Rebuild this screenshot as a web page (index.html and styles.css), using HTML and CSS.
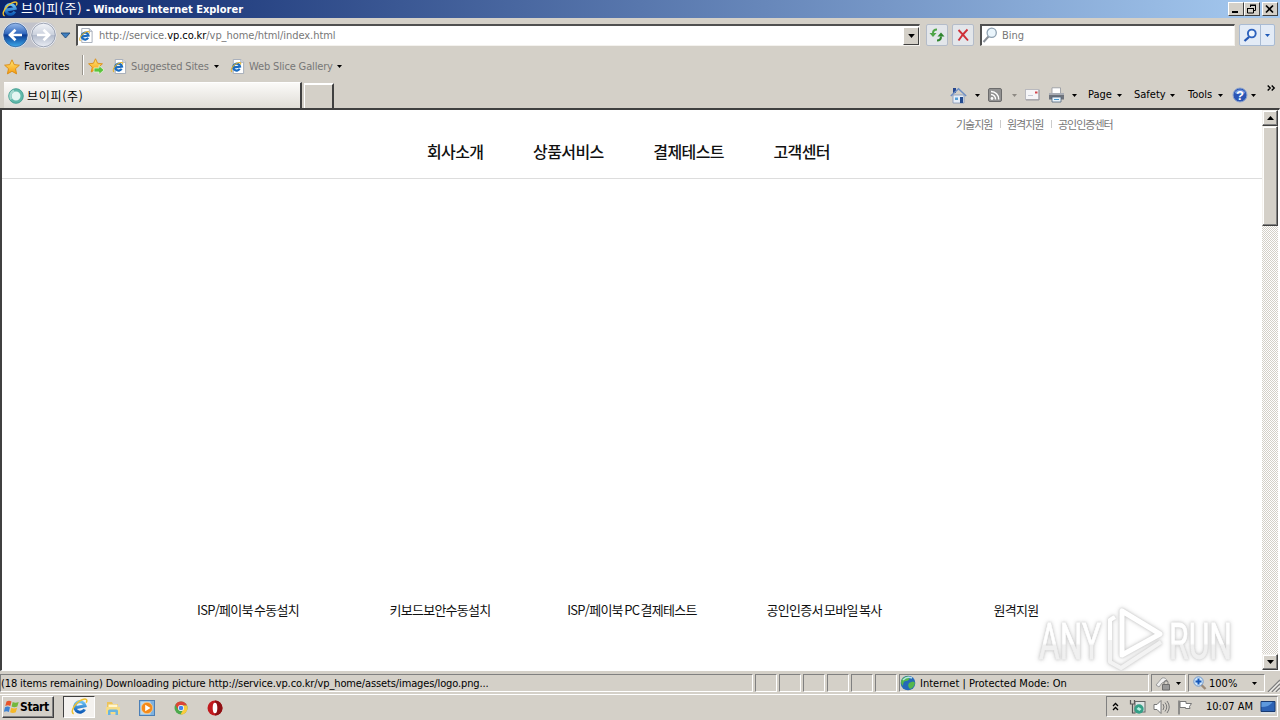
FILE: index.html
```html
<!DOCTYPE html>
<html lang="ko">
<head>
  <meta charset="UTF-8">
  <meta name="viewport" content="width=device-width, initial-scale=1.0">
  <title>브이피(주)</title>
  <link rel="stylesheet" href="styles.css">
</head>
<body>
  <!-- shared icons -->
  <svg class="defs" width="0" height="0">
    <defs>
      <linearGradient id="blueBall" x1="0" y1="0" x2="0" y2="1">
        <stop offset="0" stop-color="#9fc0ee"/>
        <stop offset=".45" stop-color="#2f66bd"/>
        <stop offset=".5" stop-color="#0b3a92"/>
        <stop offset="1" stop-color="#3fb0f0"/>
      </linearGradient>
      <linearGradient id="greyBall" x1="0" y1="0" x2="0" y2="1">
        <stop offset="0" stop-color="#f4f6fa"/>
        <stop offset=".48" stop-color="#ccd2de"/>
        <stop offset=".52" stop-color="#b4bccd"/>
        <stop offset="1" stop-color="#eef1f7"/>
      </linearGradient>
      <linearGradient id="gold" x1="0" y1="0" x2="0" y2="1">
        <stop offset="0" stop-color="#ffe878"/>
        <stop offset="1" stop-color="#f79b0c"/>
      </linearGradient>
      <linearGradient id="eBlue" x1="0" y1="0" x2="0" y2="1">
        <stop offset="0" stop-color="#6cc4f5"/>
        <stop offset="1" stop-color="#0f5cb8"/>
      </linearGradient>
      <linearGradient id="markFill" x1="0" y1="0" x2="0" y2="1">
        <stop offset=".52" stop-color="#ffffff"/>
        <stop offset=".56" stop-color="#f0f0f0"/>
      </linearGradient>
      <symbol id="ie" viewBox="0 0 16 16">
        <path d="M12.800 10.700A4.900 5 -20 1 1 13.200 7.300L5 9" fill="none" stroke="url(#eBlue)" stroke-width="2.900"/>
        <path d="M2.600 14.800C-1.500 13.500 4 4 10.500 1.600 14.500.2 15.800 1.500 14.300 4.500" fill="none" stroke="#efc02e" stroke-width="1.400"/>
      </symbol>
      <symbol id="iepage" viewBox="0 0 16 16">
        <path d="M3.500.5h8l3 3v12h-11z" fill="#fff" stroke="#a3abb8"/>
        <path d="M11.500.5v3h3" fill="#dde4ee" stroke="#a3abb8"/>
        <path d="M10.300 10.500A3.700 3.700 0 1 1 10.700 8L4.500 9" fill="none" stroke="#1b6cc0" stroke-width="2.300"/>
        <path d="M2.200 13.600C-.8 12.300 4 5.500 8.500 4c2.600-.8 3.500.2 2.800 2" fill="none" stroke="#e0b02b" stroke-width="1.100"/>
      </symbol>
      <symbol id="star" viewBox="0 0 16 16">
        <path d="M8 .8l2.200 4.800 5.200.6-3.900 3.500 1.100 5.200L8 12.300l-4.600 2.600 1.100-5.200L.6 6.200l5.200-.6z" fill="url(#gold)" stroke="#d98a12" stroke-width=".9"/>
      </symbol>
      <symbol id="down" viewBox="0 0 5 3"><path d="M0 0h5L2.500 3z" fill="currentColor"/></symbol>
    </defs>
  </svg>

  <div class="titlebar">
    <svg class="title-icon" width="16" height="16"><use href="#ie"/></svg>
    <span class="title-text"><span class="title-ko">브이피(주)</span> - Windows Internet Explorer</span>
    <div class="window-buttons">
      <span class="win-btn"><svg width="12" height="10"><path d="M2 8h6" stroke="#000" stroke-width="2"/></svg></span>
      <span class="win-btn"><svg width="12" height="10"><path d="M4 1h6M4 1.500h6M4.500 1v2M9.500 1v5.500H8M1.500 4v5h6V4M1 4.500h7" fill="none" stroke="#000"/></svg></span>
      <span class="win-btn close"><svg width="12" height="10"><path d="M2 1.500l7 7M9 1.500l-7 7" stroke="#000" stroke-width="1.700"/></svg></span>
    </div>
  </div>

  <div class="address-row">
    <svg class="travel" width="74" height="30" viewBox="0 0 74 30">
      <path d="M10 2.500h38q8 1 8 12.500t-8 12.500H10z" fill="#c2c3cb"/>
      <circle cx="15.500" cy="15" r="12.500" fill="url(#blueBall)" stroke="#e7edf5"/>
      <circle cx="15.500" cy="15" r="11.800" fill="none" stroke="#33588f" stroke-width=".7"/>
      <path d="M22 15H10.500M15.500 9.800L10 15l5.500 5.200" fill="none" stroke="#fff" stroke-width="2.700"/>
      <circle cx="43.500" cy="15" r="12.500" fill="url(#greyBall)" stroke="#f1f2f5"/>
      <circle cx="43.500" cy="15" r="11.800" fill="none" stroke="#8891a3" stroke-width=".8"/>
      <path d="M37 15h11.500M43.500 9.800L49 15l-5.500 5.200" fill="none" stroke="#fff" stroke-width="2.700"/>
      <path d="M61 13h9l-4.500 5z" fill="#3f7fc0" stroke="#234c7c" stroke-width=".9"/>
    </svg>
    <div class="field address">
      <svg width="16" height="15"><use href="#iepage"/></svg>
      <span class="url">http://service.<b>vp.co.kr</b>/vp_home/html/index.html</span>
      <span class="drop-btn"><svg width="7" height="4"><use href="#down"/></svg></span>
    </div>
    <span class="tool-btn">
      <svg width="18" height="16" viewBox="0 0 18 16"><path d="M9 2.500Q5 2.500 5 6" fill="none" stroke="#4fa548" stroke-width="2"/><path d="M1.500 6h7L5 10z" fill="#4fa548"/><path d="M9 13.500q4 0 4-4" fill="none" stroke="#2f852e" stroke-width="2"/><path d="M9.500 9.500h7L13 5.500z" fill="#2f852e"/></svg>
    </span>
    <span class="tool-btn">
      <svg width="14" height="14"><path d="M2.500 2q4 4 9.500 10.500M11.500 1.500Q6 7 2.500 12.500" fill="none" stroke="#cf3038" stroke-width="1.900"/></svg>
    </span>
    <div class="field search">
      <svg width="17" height="17" viewBox="0 0 17 17"><path d="M6.500 9.500L1.500 15" stroke="#8b9199" stroke-width="2"/><circle cx="9.700" cy="5.800" r="4.600" fill="#eaf5fc" stroke="#8fa2b2" stroke-width="1.300"/></svg>
      <span class="hint">Bing</span>
    </div>
    <div class="search-btn">
      <span class="go"><svg width="15" height="15" viewBox="0 0 15 15"><path d="M6 9L1.500 13" stroke="#2457b3" stroke-width="2.300"/><circle cx="8.800" cy="5.500" r="3.900" fill="#eef5fd" stroke="#2d62bd" stroke-width="1.900"/></svg></span>
      <span class="more"><svg width="5" height="3"><use href="#down"/></svg></span>
    </div>
  </div>

  <div class="favorites-row">
    <svg class="fav-star" width="16" height="16"><use href="#star"/></svg>
    <span class="fav-label">Favorites</span>
    <span class="divider"></span>
    <svg class="fav-add" width="17" height="17" viewBox="0 0 17 17"><use href="#star" width="15" height="15"/><path d="M6 10h5V7.500l5 4.500-5 4.500V14H6z" fill="#5ac43c" stroke="#e5f5d8" stroke-width=".8"/></svg>
    <svg class="fav-icon" width="15" height="15"><use href="#iepage"/></svg>
    <span class="fav-link suggested">Suggested Sites</span>
    <svg class="fav-arrow" width="5" height="3"><use href="#down"/></svg>
    <svg class="fav-icon" width="15" height="15"><use href="#iepage"/></svg>
    <span class="fav-link gallery">Web Slice Gallery</span>
    <svg class="fav-arrow" width="5" height="3"><use href="#down"/></svg>
  </div>

  <div class="tab-row">
    <div class="tab">
      <svg width="16" height="16"><circle cx="8" cy="8" r="6" fill="#e4f6f2" stroke="#62b9ab" stroke-width="3"/><path d="M3 11.500A6 6 0 0 1 6 2.500" fill="none" stroke="#a5d9d0" stroke-width="2.500"/><circle cx="8" cy="8" r="7.300" fill="none" stroke="#3d9a8c" stroke-width=".7"/></svg>
      <span class="tab-title">브이피(주)</span>
    </div>
    <div class="new-tab"></div>
    <div class="commands">
      <span class="cmd home">
        <svg width="17" height="17" viewBox="0 0 17 17"><path d="M3 1h3v5H3z" fill="#26478e"/><path d="M3 8h11v8H3z" fill="#e6eef8" stroke="#8394b4" stroke-width=".8"/><path d="M.8 9L8.500 1.800 16.200 9" fill="none" stroke="#6f8fc4" stroke-width="1.500"/><path d="M5 10.500h3V13H5z" fill="#55a0d8"/><path d="M10 10h3v6h-3z" fill="#244c91"/></svg>
        <svg class="arr" width="5" height="3"><use href="#down"/></svg>
      </span>
      <span class="cmd rss">
        <svg width="14" height="14"><rect x=".5" y=".5" width="13" height="13" rx="1.500" fill="#929292" stroke="#6c6c6c"/><circle cx="4" cy="10.500" r="1.400" fill="#fff"/><path d="M3 6.500a4.500 4.500 0 0 1 4.500 5M3 3.500a7.600 7.600 0 0 1 7.700 8" fill="none" stroke="#fff" stroke-width="1.500"/></svg>
        <svg class="arr" width="5" height="3"><use href="#down"/></svg>
      </span>
      <span class="cmd mail">
        <svg width="15" height="12"><rect x=".5" y=".5" width="13.500" height="10" fill="#f5f5f7" stroke="#b9b9be"/><path d="M14 1v10H1" fill="none" stroke="#98989e"/><path d="M10 2.500h2.500v2H10z" fill="#d3444b"/><path d="M3 6.500h5" stroke="#c5c9d4"/></svg>
      </span>
      <span class="cmd print">
        <svg width="17" height="16" viewBox="0 0 17 16"><path d="M4 .8h8.500V7H4z" fill="#fff" stroke="#92969c" stroke-width=".8"/><path d="M1 6h15v6.500H1z" fill="#6e737c"/><path d="M1 6h15v2H1z" fill="#a9adb5"/><path d="M4 10h9v5H4z" fill="#eaf4fb" stroke="#52657c" stroke-width=".8"/><path d="M6 12.500h5" stroke="#449ad2"/></svg>
        <svg class="arr" width="5" height="3"><use href="#down"/></svg>
      </span>
      <span class="cmd page"><span>Page</span><svg class="arr" width="5" height="3"><use href="#down"/></svg></span>
      <span class="cmd safety"><span>Safety</span><svg class="arr" width="5" height="3"><use href="#down"/></svg></span>
      <span class="cmd tools"><span>Tools</span><svg class="arr" width="5" height="3"><use href="#down"/></svg></span>
      <span class="cmd help">
        <svg width="16" height="16"><circle cx="8" cy="8" r="7" fill="#2a55b5" stroke="#8fa6cf"/><path d="M2.500 6a6 6 0 0 1 11 0q-5 2-11 0" fill="#6c92dc"/><text x="8" y="12.500" text-anchor="middle" class="help-mark">?</text></svg>
        <svg class="arr" width="5" height="3"><use href="#down"/></svg>
      </span>
      <svg class="chevrons" width="9" height="6"><path d="M.7.5l2.500 2.500L.7 5.500M4.700.5l2.500 2.500-2.500 2.500" fill="none" stroke="#000" stroke-width="1.400"/></svg>
    </div>
  </div>

  <div class="viewport">
    <div class="page-body">
      <header class="site-header">
        <ul class="util">
          <li>기술지원</li>
          <li>원격지원</li>
          <li>공인인증센터</li>
        </ul>
        <ul class="gnb">
          <li>회사소개</li>
          <li>상품서비스</li>
          <li>결제테스트</li>
          <li>고객센터</li>
        </ul>
      </header>
      <ul class="quick">
        <li>ISP/페이북 수동설치</li>
        <li>키보드보안수동설치</li>
        <li>ISP/페이북 PC 결제테스트</li>
        <li>공인인증서 모바일 복사</li>
        <li>원격지원</li>
      </ul>
    </div>
    <div class="scrollbar">
      <span class="scroll-btn"><svg width="7" height="4"><path d="M0 4h7L3.500 0z"/></svg></span>
      <span class="thumb"></span>
      <span class="scroll-btn bottom"><svg width="7" height="4"><path d="M0 0h7L3.500 4z"/></svg></span>
    </div>
    <svg class="watermark" width="216" height="70" viewBox="0 0 216 70">
      <g fill="url(#markFill)" stroke="url(#markFill)" stroke-width=".8">
        <text x="8" y="53" textLength="62" lengthAdjust="spacingAndGlyphs">ANY</text>
        <text x="138" y="53" textLength="63" lengthAdjust="spacingAndGlyphs">RUN</text>
      </g>
      <g fill="none" stroke="#fff" stroke-linejoin="round">
        <path d="M91 5v44l38-21z" stroke-width="5"/>
        <path d="M83 11l-4 3v42l11 6 40-26" stroke="#f3f3f3" stroke-width="4"/>
        <path d="M79 34V14l5-3" stroke-width="4"/>
      </g>
    </svg>
  </div>

  <div class="statusbar">
    <span class="cell message">(18 items remaining) Downloading picture http://service.vp.co.kr/vp_home/assets/images/logo.png...</span>
    <span class="cell small"></span>
    <span class="cell small"></span>
    <span class="cell small"></span>
    <span class="cell small"></span>
    <span class="cell small"></span>
    <span class="cell small"></span>
    <span class="cell zone">
      <svg width="16" height="16"><circle cx="8" cy="8" r="7.300" fill="#2468b8"/><path d="M3 3q4-3 7-1-1 4-4 4T3 11Q-1 7 3 3M9 8q5-3 6 0-1 5-5 6-3-3-1-6" fill="#54b64b"/><path d="M3 5q4-4 9-2" fill="none" stroke="#b4e3ee" stroke-width="1.500"/></svg>
      <span>Internet | Protected Mode: On</span>
    </span>
    <span class="cell lock">
      <svg width="17" height="15"><path d="M1 9l6-7q4-1 5 3l-5 2-3 4z" fill="#f0f0f0" stroke="#9b9b9b"/><path d="M7.500 8.500h7v5.500h-7z" fill="#999" stroke="#6e6e6e"/><path d="M9 8V6.500a2 2 0 0 1 4 0V8" fill="none" stroke="#777"/></svg>
      <svg class="arr" width="5" height="3"><use href="#down"/></svg>
    </span>
    <span class="cell zoom">
      <svg width="14" height="14"><path d="M8 8.500l4.500 4.500" stroke="#9c8b79" stroke-width="2.400"/><circle cx="5.500" cy="5.500" r="4.700" fill="#cfe6fa" stroke="#7198cb"/><path d="M5.500 2.500v6M2.500 5.500h6" stroke="#1657b8" stroke-width="2"/></svg>
      <span>100%</span>
      <svg class="arr" width="5" height="3"><use href="#down"/></svg>
    </span>
    <svg class="grip" width="13" height="14"><path d="M1 14L13 2M5 14l8-8M9 14l4-4" stroke="#808080" stroke-width="1.500"/><path d="M2.500 14L13 3.500M6.500 14L13 7.500M10.500 14l2.500-2.500" stroke="#fff"/></svg>
  </div>

  <div class="taskbar">
    <div class="start">
      <svg width="16" height="16" viewBox="0 0 16 16"><path d="M2.500 2.500q2.500-1.500 5 0L6.300 7q-2.300-1.300-5 0z" fill="#e8552b"/><path d="M8.700 3q2.500 1.400 6 0l-1.400 4.500q-3 1.300-5.700 0z" fill="#73b83c"/><path d="M1 8.300q2.500-1.400 5 0l-1.200 4.600q-2.400-1.400-5 0z" fill="#3f83d3"/><path d="M7.300 8.800q2.700 1.300 5.800 0L11.800 13.300q-2.900 1.300-5.700 0z" fill="#f5b828"/></svg>
      <span>Start</span>
    </div>
    <div class="task-active"><svg width="17" height="17"><use href="#ie"/></svg></div>
    <svg class="task-icon" width="16" height="16"><path d="M2 2h5l1 2h5v9H2z" fill="#edc35a"/><path d="M3.500 4.500h9v5h-9z" fill="#fff6d0"/><path d="M1 7h14v7H1z" fill="#f6dc87"/><path d="M3 15v-4q0-1.500 1.500-1.500h7q1.500 0 1.500 1.500v4h-2.500v-3h-5v3z" fill="#69b4df"/></svg>
    <svg class="task-icon" width="16" height="16"><rect x=".5" y=".5" width="15" height="15" fill="#7fb2df" stroke="#4b7fb7"/><rect x="1.500" y="1.500" width="10" height="13" fill="#b9d8ef"/><circle cx="8" cy="8" r="5.700" fill="#f48a1a" stroke="#fbd095" stroke-width=".7"/><path d="M6.200 4.700v6.600L11.500 8z" fill="#fff"/></svg>
    <svg class="task-icon" width="16" height="16"><circle cx="8" cy="8" r="6.500" fill="#4ca94c"/><path d="M2.300 4.800A6.500 6.500 0 0 1 14 5.500H8z" fill="#dc4437"/><path d="M2.300 4.800L5.500 10 8 8V5z" fill="#dc4437"/><path d="M14 5.500A6.500 6.500 0 0 1 7.500 14.500L10.500 9 9 5.500z" fill="#fbcb3c"/><circle cx="8" cy="8" r="3" fill="#fff"/><circle cx="8" cy="8" r="2.300" fill="#4284ee"/></svg>
    <svg class="task-icon" width="16" height="16"><circle cx="8" cy="8" r="7.500" fill="#c11a1e"/><path d="M8 .5a7.500 7.500 0 0 1 0 15z" fill="#8e1014"/><ellipse cx="8" cy="8" rx="2.300" ry="5.300" fill="#fff"/></svg>
    <div class="tray">
      <svg class="tray-up" width="7" height="9"><path d="M1 4l2.500-2.500L6 4M1 8l2.500-2.500L6 8" fill="none" stroke="#000" stroke-width="1.300"/></svg>
      <svg class="tray-net" width="17" height="16"><path d="M1.500 1v4h4V1M3.500 5v9h3" fill="none" stroke="#555" stroke-width="1.200"/><rect x="6" y="2.500" width="10" height="10.500" fill="#dfe5e5" stroke="#666"/><circle cx="10" cy="10" r="4.700" fill="#35a087"/><path d="M7.500 10l2-2 3 2-2 2z" fill="#b7efe0"/></svg>
      <svg class="tray-sound" width="17" height="16"><path d="M1 5.500h3L8 1.500v13l-4-4H1z" fill="#fff" stroke="#777"/><path d="M10 5q2 3 0 6M12 3.500q3.500 4.500 0 9M14 2q4.500 6 0 12" fill="none" stroke="#777"/></svg>
      <svg class="tray-flag" width="16" height="16"><path d="M2 1.500v14" stroke="#777" stroke-width="1.500"/><path d="M3 2.500h6v2h5.500l-2 3 .5 2H8.500v-1H3z" fill="#fff" stroke="#777"/></svg>
      <span class="clock">10:07 AM</span>
      <svg class="tray-screen" width="16" height="14"><path d="M1 1.500h14v10H1z" fill="#2c62b4" stroke="#183a71"/><path d="M1.500 2h11q-3 5-11 5z" fill="#5e99dd"/><path d="M1 13h14" stroke="#dbe8f8"/></svg>
    </div>
  </div>
</body>
</html>
```
FILE: styles.css
```css
* {
  box-sizing: border-box;
}
body {
  margin: 0;
  width: 1280px;
  height: 720px;
  overflow: hidden;
  display: flex;
  flex-direction: column;
  background: #d4d0c8;
  color: #000;
  font-family: "DejaVu Sans Condensed", "Noto Sans CJK KR", sans-serif;
  font-size: 11px;
  line-height: 14px;
  white-space: nowrap;
}
svg {
  display: block;
  flex: none;
}
ul {
  list-style: none;
  margin: 0;
  padding: 0;
}
.defs {
  position: absolute;
}

/* title bar */
.titlebar {
  display: flex;
  align-items: center;
  height: 18px;
  padding: 0 2px;
  background: linear-gradient(to right, #0a246a, #a6caf0);
}
.title-text {
  margin-left: 3px;
  color: #fff;
  font-weight: bold;
}
.title-ko {
  font-family: "Noto Sans CJK KR", sans-serif;
  font-size: 13px;
  font-weight: normal;
  letter-spacing: 0.8px;
}
.window-buttons {
  display: flex;
  margin-left: auto;
}
.win-btn {
  display: flex;
  align-items: center;
  justify-content: center;
  width: 16px;
  height: 14px;
  background: #d4d0c8;
  border: 1px solid;
  border-color: #fff #404040 #404040 #fff;
}
.close {
  margin-left: 2px;
}

/* address row */
.address-row {
  display: flex;
  align-items: center;
  height: 34px;
}
.travel {
  margin-right: 2px;
}
.field {
  display: flex;
  align-items: center;
  height: 22px;
  background: #fff;
  border: 1px solid;
  border-width: 2px 1px 1px 2px;
  border-color: #505050 #f4f2ee #f4f2ee #505050;
}
.address {
  width: 844px;
}
.url {
  margin-left: 5px;
  color: #777;
  letter-spacing: -0.05px;
}
.url b {
  color: #000;
  font-weight: normal;
}
.drop-btn {
  display: flex;
  align-items: center;
  justify-content: center;
  width: 16px;
  height: 18px;
  margin-left: auto;
  background: #d4d0c8;
  border: 1px solid;
  border-color: #fff #404040 #404040 #fff;
}
.tool-btn {
  display: flex;
  align-items: center;
  justify-content: center;
  width: 22px;
  height: 22px;
  margin-left: 6px;
  background: #e3e6ea;
  border: 1px solid #b4bcc9;
  border-radius: 2px;
}
.tool-btn + .tool-btn {
  margin-left: 4px;
}
.search {
  width: 255px;
  margin-left: 6px;
}
.hint {
  margin-left: 3px;
  color: #777;
}
.search-btn {
  display: flex;
  width: 36px;
  height: 22px;
  margin-left: 4px;
  background: #e3ebf6;
  border: 1px solid #a9bbd3;
  border-radius: 2px;
  color: #1f5ab8;
}
.go,
.more {
  display: flex;
  align-items: center;
  justify-content: center;
}
.go {
  width: 21px;
  border-right: 1px solid #a9bbd3;
}
.more {
  flex: 1;
}

/* favorites row */
.favorites-row {
  display: flex;
  align-items: center;
  height: 29px;
  padding-left: 4px;
}
.fav-label {
  width: 58px;
  padding-left: 4px;
  letter-spacing: 0.1px;
}
.divider {
  width: 2px;
  height: 20px;
  margin: 0 4px 4px;
  border-left: 1px solid #99958d;
  border-right: 1px solid #fff;
}
.fav-add {
  margin-right: 7px;
}
.fav-link {
  margin-left: 4px;
  padding-top: 1px;
  color: #777;
  letter-spacing: -0.15px;
}
.suggested {
  width: 83px;
}
.gallery {
  width: 88px;
}
.fav-arrow {
  margin-right: 11px;
}

/* tabs and command bar */
.tab-row {
  display: flex;
  height: 27px;
}
.tab {
  display: flex;
  align-items: center;
  width: 298px;
  height: 27px;
  margin: 1px 0 0 4px;
  padding-left: 4px;
  background: linear-gradient(#fbfaf8, #dfdcd6);
  border-top: 1px solid #fff;
  border-right: 2px solid #404040;
}
.tab-title {
  margin-left: 3px;
  font-family: "Noto Sans CJK KR", sans-serif;
  font-size: 12px;
  letter-spacing: 0.7px;
}
.new-tab {
  width: 30px;
  height: 25px;
  margin: 2px 0 0 2px;
  border: 1px solid #fff;
  border-width: 2px 2px 0 1px;
  border-right-color: #404040;
}
.commands {
  display: flex;
  margin-left: 616px;
  height: 28px;
}
.cmd {
  display: flex;
  align-items: center;
}
.arr {
  margin-left: auto;
}
.home {
  width: 30px;
}
.rss {
  width: 37px;
  margin-left: 8px;
  padding-right: 8px;
  color: #8e8a84;
}
.mail {
  width: 24px;
}
.print {
  width: 29px;
  margin-left: -1px;
}
.page {
  width: 34px;
  margin-left: 11px;
}
.safety {
  width: 41px;
  margin-left: 12px;
}
.tools {
  width: 35px;
  margin-left: 13px;
}
.help {
  width: 24px;
  margin-left: 9px;
}
.help-mark {
  fill: #fff;
  font-family: "Liberation Sans", sans-serif;
  font-size: 13px;
  font-weight: bold;
}
.chevrons {
  margin: 4px 0 0 11px;
}

/* loaded page */
.viewport {
  position: relative;
  display: flex;
  height: 563px;
  background: #fff;
  border: 1px solid #fff;
  border-width: 2px 1px 1px 2px;
  border-top-color: #404040;
  border-left-color: #404040;
}
.page-body {
  width: 1260px;
  font-family: "Noto Sans CJK KR", sans-serif;
}
.site-header {
  height: 69px;
  border-bottom: 1px solid #ddd;
}
.util {
  display: flex;
  align-items: center;
  height: 27px;
  padding-left: 954px;
  color: #777;
  font-size: 11px;
  letter-spacing: -1px;
}
.util li {
  width: 51px;
}
.util li + li::before {
  content: "";
  float: left;
  height: 8px;
  margin: 3px 6px 0 -7px;
  border-left: 1px solid #ccc;
}
.gnb {
  display: flex;
  padding: 4px 0 0 425px;
  color: #111;
  font-size: 16px;
  font-weight: 500;
  line-height: 20px;
  letter-spacing: -0.6px;
}
.gnb li {
  margin-right: 49.6px;
}
.quick {
  display: flex;
  margin: 421px 0 0 150px;
  color: #111;
  font-size: 13px;
  line-height: 20px;
  letter-spacing: -0.75px;
  word-spacing: -1.5px;
}
.quick li {
  width: 192px;
  text-align: center;
}
.scrollbar {
  display: flex;
  flex-direction: column;
  width: 16px;
  background: repeating-conic-gradient(#fff 0 25%, #d4d0c8 0 50%) 0 0 / 2px 2px;
}
.scroll-btn,
.thumb {
  display: flex;
  align-items: center;
  justify-content: center;
  height: 16px;
  background: #d4d0c8;
  border: 1px solid;
  border-color: #f4f2ee #404040 #404040 #f4f2ee;
  box-shadow: inset -1px -1px #808080, inset 1px 1px #fff;
}
.thumb {
  height: 100px;
}
.bottom {
  margin-top: auto;
}
.watermark {
  position: absolute;
  left: 1029px;
  top: 496px;
  font-family: Roboto, sans-serif;
  font-size: 50px;
  filter: drop-shadow(0 0 1px #ccc) drop-shadow(0 0 2px #d4d4d4);
}

/* status bar */
.statusbar {
  display: flex;
  height: 23px;
  padding-top: 3px;
}
.cell {
  display: flex;
  align-items: center;
  height: 18px;
  margin-right: 2px;
  border: 1px solid;
  border-color: #808080 #fff #fff #808080;
}
.message {
  width: 753px;
  padding-top: 1px;
  letter-spacing: -0.12px;
}
.small {
  width: 22px;
}
.zone {
  width: 250px;
}
.zone span {
  margin-left: 4px;
  padding-top: 1px;
}
.lock {
  width: 35px;
  padding: 0 4px 0 3px;
}
.zoom {
  width: 77px;
  padding: 0 7px 0 4px;
}
.zoom span {
  margin-left: 2px;
  padding-top: 1px;
}
.grip {
  margin-top: 4px;
}

/* taskbar */
.taskbar {
  display: flex;
  align-items: center;
  height: 26px;
  padding: 0 2px;
  border-top: 1px solid #fff;
}
.start {
  display: flex;
  align-items: center;
  width: 52px;
  height: 22px;
  margin-bottom: 2px;
  padding-left: 1px;
  border: 1px solid;
  border-color: #fff #404040 #404040 #fff;
  box-shadow: inset -1px -1px #808080;
  font-weight: bold;
  font-size: 12px;
  letter-spacing: -0.4px;
}
.task-active {
  display: flex;
  align-items: center;
  justify-content: center;
  width: 32px;
  height: 22px;
  margin: 0 10px 2px 9px;
  background: #f4f2ef;
  border: 1px solid;
  border-color: #404040 #fff #fff #404040;
}
.task-icon {
  margin-right: 18px;
}
.tray {
  display: flex;
  align-items: center;
  width: 172px;
  height: 21px;
  margin: 0 0 2px auto;
  border: 1px solid;
  border-color: #808080 #fff #fff #808080;
}
.tray-up {
  margin-left: 5px;
}
.tray-net {
  margin-left: 10px;
}
.tray-sound {
  margin-left: 7px;
}
.tray-flag {
  margin-left: 7px;
}
.clock {
  width: 47px;
  margin-left: 13px;
}
.tray-screen {
  margin-left: 7px;
}
```
